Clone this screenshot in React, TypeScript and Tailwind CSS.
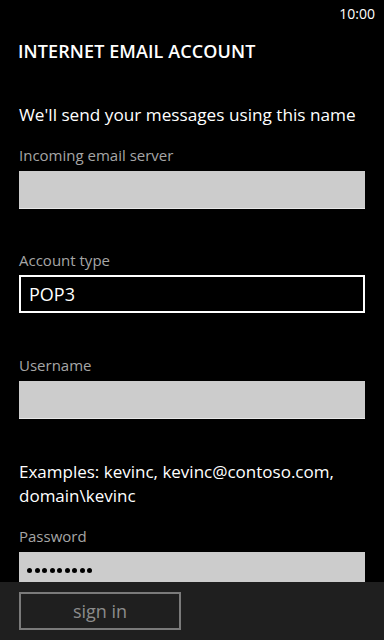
import React from 'react'

const font = { fontFamily: '"Open Sans", "Liberation Sans", sans-serif' }

function Label({ children }: { children: React.ReactNode }) {
  return <div className="text-[15px] leading-[20px] text-[#a6a6a6]">{children}</div>
}

function GrayBox({ children }: { children?: React.ReactNode }) {
  return (
    <div className="mt-[6px] flex h-[38px] w-[346px] items-center border-b border-[#e8e8e8] bg-[#cccccc] px-[8px]">
      {children}
    </div>
  )
}

export default function App() {
  return (
    <div className="flex h-[640px] w-[384px] flex-col bg-black text-white" style={font}>
      <div className="flex-1 overflow-hidden">
        <div className="flex h-[26px] items-center justify-end pr-[9px] text-[14px]">10:00</div>
        <div className="mt-[13px] pl-[18px] text-[18px] font-semibold leading-[24px] tracking-[0.1px]">
          INTERNET EMAIL ACCOUNT
        </div>
        <div className="px-[19px]">
          <div className="mt-[40px] text-[17.2px] leading-[24px]">
            We'll send your messages using this name
          </div>
          <div className="mt-[18px]">
            <Label>Incoming email server</Label>
            <GrayBox />
          </div>
          <div className="mt-[41px]">
            <Label>Account type</Label>
            <div className="mt-[5px] flex h-[38px] w-[346px] items-center border-2 border-white bg-black px-[8px] text-[18px]">
              POP3
            </div>
          </div>
          <div className="mt-[42px]">
            <Label>Username</Label>
            <GrayBox />
          </div>
          <div className="mt-[41px] text-[17px] leading-[24px]">
            Examples: kevinc, kevinc@contoso.com,
            <br />
            domain\kevinc
          </div>
          <div className="mt-[18px]">
            <Label>Password</Label>
            <GrayBox>
              <div className="flex gap-[2.5px]">
                {Array.from({ length: 9 }).map((_, i) => (
                  <span key={i} className="h-[5px] w-[5px] rounded-full bg-black" />
                ))}
              </div>
            </GrayBox>
          </div>
        </div>
      </div>
      <div className="flex h-[58px] items-start bg-[#1f1f1f] pl-[19px] pt-[10px]">
        <button className="flex h-[38px] w-[162px] items-center justify-center border-2 border-[#7a7a7a] text-[18px] text-[#8c8c8c]">
          sign in
        </button>
      </div>
    </div>
  )
}
